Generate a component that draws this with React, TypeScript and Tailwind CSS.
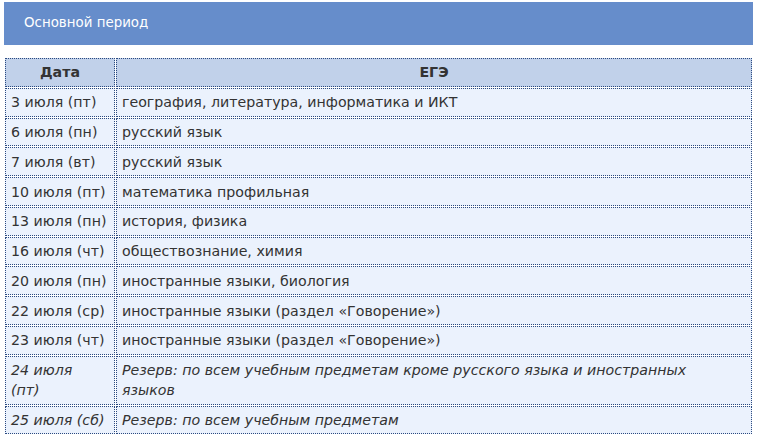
import React from "react";

const rows: { date: React.ReactNode; exam: React.ReactNode; italic?: boolean }[] = [
  { date: "3 июля (пт)", exam: "география, литература, информатика и ИКТ" },
  { date: "6 июля (пн)", exam: "русский язык" },
  { date: "7 июля (вт)", exam: "русский язык" },
  { date: "10 июля (пт)", exam: "математика профильная" },
  { date: "13 июля (пн)", exam: "история, физика" },
  { date: "16 июля (чт)", exam: "обществознание, химия" },
  { date: "20 июля (пн)", exam: "иностранные языки, биология" },
  { date: "22 июля (ср)", exam: "иностранные языки (раздел «Говорение»)" },
  { date: "23 июля (чт)", exam: "иностранные языки (раздел «Говорение»)" },
  {
    date: (
      <>
        24 июля
        <br />
        (пт)
      </>
    ),
    exam: (
      <>
        Резерв: по всем учебным предметам кроме русского языка и иностранных
        <br />
        языков
      </>
    ),
    italic: true,
  },
  { date: "25 июля (сб)", exam: "Резерв: по всем учебным предметам", italic: true },
];

const cell =
  "border border-dotted border-[#2b4a80] px-[5px] py-[3.4px] leading-[20px] align-top";

export default function App() {
  return (
    <div className="w-[757px] h-[435px] bg-white text-[#333] font-['DejaVu_Sans',sans-serif] text-[14.2px] overflow-hidden">
      <div className="mx-[4px] mt-[2px] h-[43px] bg-[#668dcb] flex items-center px-[20px] text-white text-[13.4px]">
        Основной период
      </div>
      <div className="mt-[12px] ml-[4px] w-[749px]">
        <table className="w-full border-separate border-spacing-px table-fixed">
          <colgroup>
            <col className="w-[110px]" />
            <col />
          </colgroup>
          <thead>
            <tr>
              <th className={`${cell} bg-[#c1d1ea] text-center font-bold`}>Дата</th>
              <th className={`${cell} bg-[#c1d1ea] text-center font-bold`}>ЕГЭ</th>
            </tr>
          </thead>
          <tbody>
            {rows.map((r, i) => (
              <tr key={i} className={r.italic ? "italic" : ""}>
                <td className={`${cell} bg-[#ebf2fd] whitespace-nowrap`}>{r.date}</td>
                <td className={`${cell} bg-[#ebf2fd]`}>{r.exam}</td>
              </tr>
            ))}
          </tbody>
        </table>
      </div>
    </div>
  );
}
